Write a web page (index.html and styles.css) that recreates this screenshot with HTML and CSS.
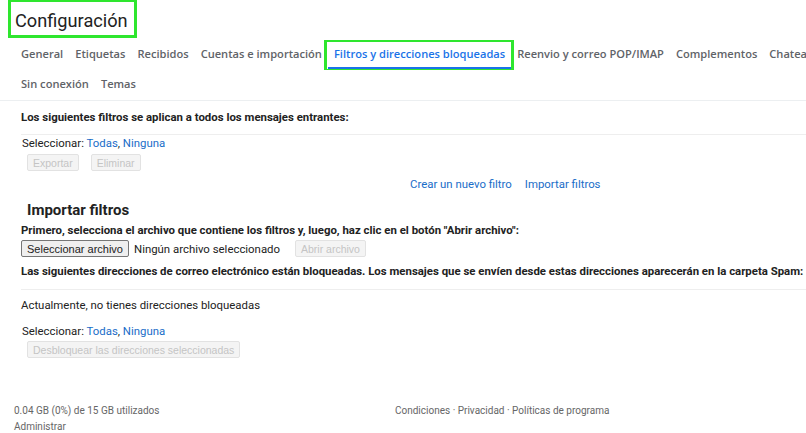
FILE: index.html
```html
<!DOCTYPE html>
<html lang="es">
<head>
    <meta charset="UTF-8">
    <meta name="viewport" content="width=device-width, initial-scale=1.0">
    <title>Configuración</title>
    <link rel="stylesheet" href="styles.css">
</head>
<body>

<div class="header">
    <h1 class="title">Configuración</h1>
</div>

<div class="tabs">
    <div class="tab-row">
        <a class="tab">General</a>
        <a class="tab">Etiquetas</a>
        <a class="tab">Recibidos</a>
        <a class="tab">Cuentas e importación</a>
        <a class="tab active">Filtros y direcciones bloqueadas</a>
        <a class="tab">Reenvio y correo POP/IMAP</a>
        <a class="tab">Complementos</a>
        <a class="tab">Chatea y reúnete</a>
    </div>
    <div class="tab-row">
        <a class="tab">Sin conexión</a>
        <a class="tab">Temas</a>
    </div>
</div>

<div class="content">
    <div class="section-title">Los siguientes filtros se aplican a todos los mensajes entrantes:</div>

    <div class="select-line">Seleccionar: <a class="link">Todas</a>, <a class="link">Ninguna</a></div>
    <div class="btn-row">
        <button class="btn" disabled>Exportar</button>
        <button class="btn" disabled>Eliminar</button>
    </div>

    <div class="filter-links">
        <a class="link">Crear un nuevo filtro</a>
        <a class="link">Importar filtros</a>
    </div>

    <h2 class="import-title">Importar filtros</h2>
    <div class="bold-line">Primero, selecciona el archivo que contiene los filtros y, luego, haz clic en el botón "Abrir archivo":</div>
    <div class="file-row">
        <button class="file-btn">Seleccionar archivo</button>
        <span class="file-name">Ningún archivo seleccionado</span>
        <button class="btn" disabled>Abrir archivo</button>
    </div>

    <div class="section-title blocked">Las siguientes direcciones de correo electrónico están bloqueadas. Los mensajes que se envíen desde estas direcciones aparecerán en la carpeta Spam:</div>
    <div class="empty-note">Actualmente, no tienes direcciones bloqueadas</div>

    <div class="select-line second">Seleccionar: <a class="link">Todas</a>, <a class="link">Ninguna</a></div>
    <div class="btn-row last">
        <button class="btn" disabled>Desbloquear las direcciones seleccionadas</button>
    </div>
</div>

<div class="footer">
    <div class="footer-left">
        <div>0.04 GB (0%) de 15 GB utilizados</div>
        <div>Administrar</div>
    </div>
    <div class="footer-center">Condiciones · Privacidad · Políticas de programa</div>
</div>

</body>
</html>
```

FILE: styles.css
```css
body {
    margin: 0;
    font-family: Roboto, "Liberation Sans", Arial, sans-serif;
    font-size: 11.4px;
    color: #222;
    background: #fff;
    overflow: hidden;
}
a {
    cursor: pointer;
}
.header {
    padding-left: 8px;
    height: 40px;
}
.title {
    box-sizing: border-box;
    width: 129px;
    height: 38px;
    margin: 0;
    padding: 5px 0 0 4px;
    font-family: Roboto, sans-serif;
    font-size: 18.2px;
    font-weight: 400;
    line-height: 27px;
    color: #222;
    border: 3px solid #2ee62e;
    border-top-width: 2px;
}
.tabs {
    padding-left: 15px;
    border-bottom: 1px solid #eceff1;
}
.tab-row {
    display: flex;
    white-space: nowrap;
    overflow: hidden;
    height: 30px;
}
.tab {
    position: relative;
    padding: 0 6px;
    height: 27px;
    line-height: 27px;
    border-bottom: 3px solid transparent;
    font-family: "Open Sans", sans-serif;
    font-size: 11.1px;
    font-weight: 600;
    color: #5f6368;
}
.tab.active {
    color: #1a73e8;
    border-bottom-color: #1a73e8;
}
.tab.active::after {
    content: "";
    position: absolute;
    left: -4px;
    right: -3px;
    top: -1px;
    bottom: -5px;
    border: 3px solid #2ee62e;
}
.content {
    padding-left: 21px;
}
.section-title {
    font-weight: 700;
    line-height: 15px;
    padding: 9px 0;
    border-bottom: 1px solid #eee;
    white-space: nowrap;
}
.select-line {
    margin-top: 1px;
    padding-left: 1px;
    line-height: 15px;
}
.link {
    color: #1a6dc8;
}
.btn-row {
    display: flex;
    gap: 12px;
    padding-left: 6px;
    margin-top: 3px;
}
.btn {
    height: 17px;
    padding: 0 5px;
    font-family: Arial, "Liberation Sans", sans-serif;
    font-size: 10.5px;
    color: #c4c4c4;
    background: #f4f4f4;
    border: 1px solid #e2e2e2;
    border-radius: 2px;
}
.filter-links {
    display: flex;
    gap: 13px;
    padding-left: 389px;
    margin-top: 6px;
    line-height: 15px;
}
.import-title {
    margin: 9px 0 0 6px;
    font-size: 15px;
    font-weight: 700;
    line-height: 18px;
}
.bold-line {
    font-weight: 700;
    line-height: 15px;
    margin-top: 4px;
}
.file-row {
    display: flex;
    align-items: center;
    margin-top: 2px;
    height: 17px;
}
.file-btn {
    height: 17px;
    padding: 0 5px;
    font-family: Arial, "Liberation Sans", sans-serif;
    font-size: 11px;
    color: #222;
    background: #efefef;
    border: 1px solid #767676;
    border-radius: 2px;
}
.file-name {
    margin-left: 5px;
    width: 161px;
}
.blocked {
    padding: 7px 0 10px;
}
.empty-note {
    margin-top: 8px;
    line-height: 15px;
}
.select-line.second {
    margin-top: 11px;
}
.btn-row.last {
    margin-top: 2px;
}
.footer {
    display: flex;
    margin-top: 45px;
    padding-left: 14px;
    font-size: 10px;
    color: #666;
    line-height: 16px;
}
.footer-left {
    width: 381px;
}
```
